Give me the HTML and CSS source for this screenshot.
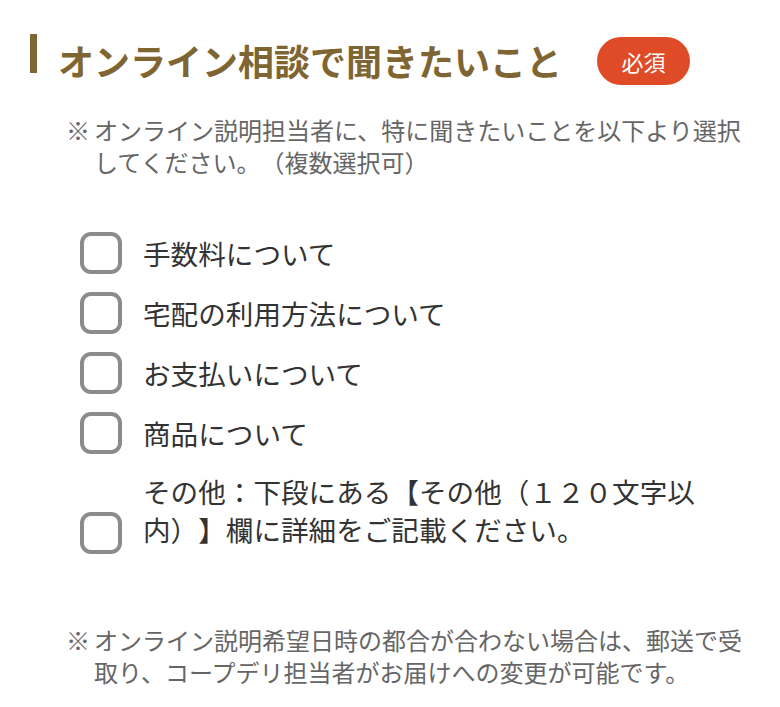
FILE: index.html
```html
<!DOCTYPE html>
<html lang="ja">
<head>
<meta charset="utf-8">
<title>オンライン相談で聞きたいこと</title>
<link rel="stylesheet" href="styles.css">
</head>
<body>
<section class="form-section">
  <div class="heading">
    <span class="heading-bar"></span>
    <h2 class="heading-title">オンライン相談で聞きたいこと</h2>
    <span class="badge">必須</span>
  </div>

  <p class="note note-top"><span class="note-mark">※</span><span class="note-text">オンライン説明担当者に、特に聞きたいことを以下より選択してください。（複数選択可）</span></p>

  <ul class="options">
    <li class="option"><span class="checkbox"></span><span class="option-label">手数料について</span></li>
    <li class="option"><span class="checkbox"></span><span class="option-label">宅配の利用方法について</span></li>
    <li class="option"><span class="checkbox"></span><span class="option-label">お支払いについて</span></li>
    <li class="option"><span class="checkbox"></span><span class="option-label">商品について</span></li>
    <li class="option option-multi"><span class="checkbox"></span><span class="option-label">その他：下段にある【その他（１２０文字以内）】欄に詳細をご記載ください。</span></li>
  </ul>

  <p class="note note-bottom"><span class="note-mark">※</span><span class="note-text">オンライン説明希望日時の都合が合わない場合は、郵送で受取り、コープデリ担当者がお届けへの変更が可能です。</span></p>
</section>
</body>
</html>
```

FILE: styles.css
```css
html, body {
  margin: 0;
  padding: 0;
  background: #ffffff;
}

body {
  font-family: "Noto Sans CJK JP", "Noto Sans", sans-serif;
  text-spacing-trim: space-all;
  width: 780px;
  height: 707px;
  overflow: hidden;
}

.form-section {
  padding: 34px 30px 0 30px;
}

.heading {
  display: flex;
  align-items: center;
  height: 52px;
}

.heading-bar {
  align-self: flex-start;
  width: 7px;
  height: 39px;
  background: #806633;
  flex: none;
}

.heading-title {
  margin: 0 0 0 21px;
  font-size: 36px;
  line-height: 50px;
  font-weight: 700;
  color: #7f6531;
  letter-spacing: 0;
  white-space: nowrap;
}

.badge {
  margin-left: 35px;
  width: 93px;
  height: 48px;
  border-radius: 24px;
  background: #de4b26;
  color: #ffffff;
  font-size: 22px;
  line-height: 48px;
  text-align: center;
  flex: none;
  margin-top: 2px;
}

.note {
  display: flex;
  margin: 0;
  padding-left: 36px;
  padding-right: 0;
  font-size: 24px;
  line-height: 32px;
  color: #666666;
}

.note-mark {
  flex: none;
  width: 28px;
}

.note-text {
  flex: 1;
}

.note-top {
  margin-top: 28px;
}

.note-bottom {
  margin-top: 74px;
}

.options {
  list-style: none;
  margin: 54px 0 0 0;
  padding: 0 40px 0 50px;
  display: flex;
  flex-direction: column;
  gap: 18px;
}

.option {
  display: flex;
  align-items: flex-end;
  gap: 21px;
}

.checkbox {
  flex: none;
  box-sizing: border-box;
  width: 42px;
  height: 42px;
  border: 4px solid #8b8b8b;
  border-radius: 11px;
  background: #ffffff;
}

.option-multi .checkbox {
  margin-bottom: -4px;
}

.option-label {
  flex: 1;
  font-size: 27.6px;
  line-height: 38px;
  padding-bottom: 2px;
  color: #333333;
}
```
